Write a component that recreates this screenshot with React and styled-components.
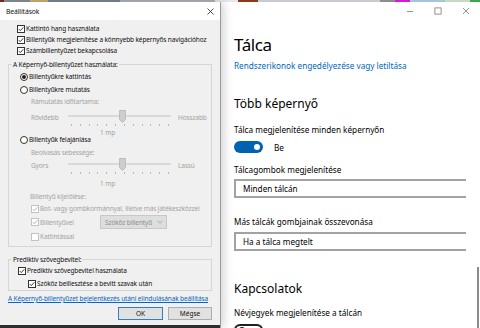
import React from 'react';
import styled, { createGlobalStyle } from 'styled-components';

const Global = createGlobalStyle`
  html, body { margin: 0; padding: 0; width: 480px; height: 328px; overflow: hidden; background: #fff; }
  *, *::before, *::after { box-sizing: border-box; }
`;

const Screen = styled.div`
  width: 480px;
  height: 328px;
  display: flex;
  flex-direction: column;
  overflow: hidden;
  font-family: "Noto Sans", "Open Sans", sans-serif;
`;

const Strip = styled.div`
  height: 2px;
  flex: none;
  background: linear-gradient(to right,
    #7a2a1a 0 4px, #8a8f96 4px 30px, #c9b27a 30px 48px, #7d8896 48px 120px,
    #b0b5bb 120px 215px, #e8e8e8 215px 238px, #8c3a1c 238px 258px, #c7ccd2 258px 380px,
    #8d8d8d 380px 395px, #d21ad2 395px 410px, #a9c3da 410px 445px, #c9d8c0 445px 470px,
    #3aa84a 470px 480px);
`;

const Main = styled.div`
  flex: 1;
  min-height: 0;
  display: flex;
`;

/* ---------- Dialog ---------- */

const Dialog = styled.section`
  width: 221px;
  flex: none;
  display: flex;
  flex-direction: column;
  background: #f0f0f0;
  border-right: 1px solid #9a9a9a;
  box-shadow: 2px 0 10px rgba(0, 0, 0, 0.2);
  position: relative;
  z-index: 2;
  font-size: 6.5px;
  letter-spacing: -0.12px;
  color: #111;
`;

const TitleBar = styled.header`
  height: 18px;
  flex: none;
  background: #fff;
  display: flex;
  align-items: center;
  justify-content: space-between;
  padding: 0 6px 0 6px;
`;

const DialogTitle = styled.span`
  font-size: 6.8px;
  color: #111;
`;

const CloseIcon = styled.svg`
  width: 7px;
  height: 7px;
  display: block;
`;

const Body = styled.div`
  flex: 1;
  display: flex;
  flex-direction: column;
  padding: 3px 8px 0 8px;
`;

const CheckRow = styled.div`
  display: flex;
  align-items: center;
  gap: 1px;
  height: ${p => p.$h || 11}px;
  margin-top: ${p => p.$mt || 0}px;
  padding-left: ${p => p.$indent || 0}px;
  color: ${p => (p.$disabled ? '#a3a3a3' : '#111')};
  white-space: nowrap;
`;

const Box = styled.span`
  width: 8px;
  height: 8px;
  flex: none;
  background: #fff;
  border: 1px solid ${p => (p.$disabled ? '#c2c2c2' : '#333')};
  display: flex;
  align-items: center;
  justify-content: center;
`;

const CheckMark = styled.svg`
  width: 6px;
  height: 6px;
  display: block;
`;

const Label = styled.span`
  flex: none;
  width: ${p => p.$w || 'auto'};
`;

const Radio = styled.span`
  width: 8px;
  height: 8px;
  flex: none;
  border-radius: 50%;
  background: #fff;
  border: 1px solid #333;
  display: flex;
  align-items: center;
  justify-content: center;
  &::after {
    content: '';
    width: 4px;
    height: 4px;
    border-radius: 50%;
    background: ${p => (p.$checked ? '#222' : 'transparent')};
  }
`;

const Group = styled.fieldset`
  margin: ${p => p.$mt || 0}px 0 0 0;
  padding: ${p => p.$pt || 0}px 0 ${p => p.$pb || 0}px 0;
  border: 1px solid #d5d5d5;
  min-width: 0;
  display: flex;
  flex-direction: column;
`;

const Legend = styled.legend`
  margin-left: 3px;
  padding: 0 1px;
  line-height: 9px;
  height: 9px;
  color: #111;
`;

const Caption = styled.div`
  height: ${p => p.$h || 11}px;
  margin-top: ${p => p.$mt || 0}px;
  padding-left: ${p => p.$indent || 0}px;
  display: flex;
  align-items: center;
  color: #a3a3a3;
  white-space: nowrap;
`;

const SliderRow = styled.div`
  height: 12px;
  margin-top: ${p => p.$mt || 0}px;
  padding-left: 22px;
  display: flex;
  align-items: center;
  color: #a3a3a3;
`;

const SliderLabel = styled.span`
  width: 37px;
  flex: none;
`;

const SliderTrack = styled.div`
  width: 103px;
  height: 12px;
  flex: none;
  margin-right: 7px;
  display: flex;
  align-items: center;
  background: linear-gradient(#d9d9d9, #d9d9d9) left 4px / 100% 2px no-repeat;
`;

const Thumb = styled.svg`
  width: 7px;
  height: 13px;
  display: block;
  margin-left: 51px;
  margin-top: -1px;
`;

const TickRow = styled.div`
  height: 5px;
  margin-left: 62px;
  width: 98px;
  display: flex;
  justify-content: space-between;
  align-items: flex-start;
  padding-top: 1px;
`;

const Tick = styled.span`
  width: 1px;
  height: 2px;
  background: #b8b8b8;
`;

const Combo = styled.div`
  width: 67px;
  height: 14px;
  flex: none;
  background: #dedede;
  border: 1px solid #c8c8c8;
  display: flex;
  align-items: center;
  justify-content: space-between;
  padding: 0 3px 0 4px;
  color: #8f8f8f;
`;

const Chevron = styled.svg`
  width: 6px;
  height: 4px;
  display: block;
`;

const DialogLink = styled.a`
  display: block;
  height: 11px;
  line-height: 11px;
  margin-top: 2px;
  color: #0066cc;
  text-decoration: underline;
  white-space: nowrap;
  cursor: pointer;
`;

const ButtonRow = styled.div`
  margin-top: 3px;
  display: flex;
  justify-content: flex-end;
  gap: 5px;
`;

const DialogButton = styled.button`
  width: ${p => p.$w}px;
  height: 13px;
  padding: 0;
  background: #e1e1e1;
  border: 1px solid ${p => (p.$default ? '#2f7fc1' : '#adadad')};
  font: inherit;
  color: #111;
  display: flex;
  align-items: center;
  justify-content: center;
`;

const BottomEdge = styled.div`
  margin-top: auto;
  height: 3px;
  flex: none;
  background: #2e2e2e;
`;

/* ---------- Settings ---------- */

const Settings = styled.main`
  flex: 1;
  min-width: 0;
  position: relative;
  background: #fff;
  padding-left: 13px;
  display: flex;
  flex-direction: column;
  overflow: hidden;
  color: #000;
`;

const WindowControls = styled.div`
  height: 18px;
  flex: none;
  display: flex;
  justify-content: flex-end;
`;

const WinButton = styled.span`
  width: 28px;
  height: 18px;
  display: flex;
  align-items: center;
  justify-content: center;
`;

const WinIcon = styled.svg`
  width: 8px;
  height: 8px;
  display: block;
`;

const PageTitle = styled.h1`
  margin: 14px 0 0 0;
  font-size: 17px;
  line-height: 22px;
  height: 22px;
  font-weight: 400;
  letter-spacing: -0.4px;
`;

const SettingsLink = styled.a`
  display: block;
  margin-top: 4px;
  font-size: 8.2px;
  line-height: 12px;
  color: #0067b8;
  cursor: pointer;
  white-space: nowrap;
`;

const SectionTitle = styled.h2`
  margin: ${p => p.$mt}px 0 0 0;
  font-size: 12px;
  line-height: 16px;
  height: 16px;
  font-weight: 400;
  white-space: nowrap;
`;

const FieldLabel = styled.div`
  margin-top: ${p => p.$mt}px;
  font-size: 8.2px;
  line-height: 12px;
  height: 12px;
  white-space: nowrap;
`;

const ToggleRow = styled.div`
  margin-top: ${p => p.$mt}px;
  height: 12px;
  flex: none;
  display: flex;
  align-items: center;
  gap: 11px;
  font-size: 8.2px;
`;

const Toggle = styled.span`
  width: 29px;
  height: 12px;
  flex: none;
  border-radius: 6px;
  display: flex;
  align-items: center;
  justify-content: ${p => (p.$on ? 'flex-end' : 'flex-start')};
  padding: 0 3px;
  background: ${p => (p.$on ? '#0063b1' : '#fff')};
  border: ${p => (p.$on ? 'none' : '2px solid #1f1f1f')};
  &::after {
    content: '';
    width: 6px;
    height: 6px;
    border-radius: 50%;
    background: ${p => (p.$on ? '#fff' : '#1f1f1f')};
  }
`;

const Select = styled.div`
  margin-top: ${p => p.$mt}px;
  width: 232px;
  height: 19px;
  flex: none;
  border-top: 2px solid #a2a2a2;
  border-bottom: 2px solid #a2a2a2;
  border-left: 2px solid #a2a2a2;
  padding-left: 7px;
  display: flex;
  align-items: center;
  font-size: 8.2px;
  white-space: nowrap;
`;

const Scrollbar = styled.div`
  position: absolute;
  right: 1px;
  top: 265px;
  width: 2px;
  height: 70px;
  background: #8a8a8a;
`;

const Check = ({ disabled }) => (
  <CheckMark viewBox="0 0 6 6">
    <path d="M0.8 3.1 L2.3 4.6 L5.3 1.3" fill="none" stroke={disabled ? '#a8a8a8' : '#222'} strokeWidth="0.9" />
  </CheckMark>
);

const CheckItem = ({ checked = true, disabled, children, ...rest }) => (
  <CheckRow $disabled={disabled} {...rest}>
    <Box $disabled={disabled}>{checked && <Check disabled={disabled} />}</Box>
    <Label>{children}</Label>
  </CheckRow>
);

const RadioItem = ({ checked, children, h = 13 }) => (
  <CheckRow $h={h} $indent={11}>
    <Radio $checked={checked} />
    <Label>{children}</Label>
  </CheckRow>
);

const Slider = ({ left, right, mt }) => (
  <>
    <SliderRow $mt={mt}>
      <SliderLabel>{left}</SliderLabel>
      <SliderTrack>
        <Thumb viewBox="0 0 7 13">
          <polygon points="0.5,0.5 6.5,0.5 6.5,9.5 3.5,12.5 0.5,9.5" fill="#cdcdcd" stroke="#bdbdbd" strokeWidth="1" />
        </Thumb>
      </SliderTrack>
      <span>{right}</span>
    </SliderRow>
    <TickRow>
      {Array.from({ length: 12 }).map((_, i) => (
        <Tick key={i} />
      ))}
    </TickRow>
  </>
);

export default function App() {
  return (
    <>
      <Global />
      <Screen>
        <Strip />
        <Main>
          <Dialog>
            <TitleBar>
              <DialogTitle>Beállítások</DialogTitle>
              <CloseIcon viewBox="0 0 7 7">
                <path d="M0.5 0.5 L6.5 6.5 M6.5 0.5 L0.5 6.5" stroke="#222" strokeWidth="0.8" />
              </CloseIcon>
            </TitleBar>
            <Body>
              <CheckItem $indent={9}>Kattintó hang használata</CheckItem>
              <CheckItem $indent={9}>Billentyűk megjelenítése a könnyebb képernyős navigációhoz</CheckItem>
              <CheckItem $indent={9}>Számbillentyűzet bekapcsolása</CheckItem>

              <Group $mt={4} $pt={1} $pb={3}>
                <Legend>A Képernyő-billentyűzet használata:</Legend>
                <RadioItem checked>Billentyűkre kattintás</RadioItem>
                <RadioItem>Billentyűkre mutatás</RadioItem>
                <Caption $indent={22}>Rámutatás időtartama:</Caption>
                <Slider left="Rövidebb" right="Hosszabb" mt={4} />
                <Caption $indent={91} $h={8}>1 mp</Caption>
                <RadioItem h={7}>Billentyűk felajánlása</RadioItem>
                <Caption $indent={22} $mt={4}>Beolvasás sebessége:</Caption>
                <Slider left="Gyors" right="Lassú" mt={1} />
                <Caption $indent={91} $h={10} $mt={2}>1 mp</Caption>
                <Caption $indent={21} $mt={3}>Billentyű kijelölése:</Caption>
                <CheckItem disabled $indent={22} $h={13}>Bot- vagy gombkormánnyal, illetve más játékeszközzel</CheckItem>
                <CheckRow $disabled $indent={22} $h={14}>
                  <Box $disabled><Check disabled /></Box>
                  <Label $w="59px">Billentyűvel</Label>
                  <Combo>
                    <span>Szóköz billentyű</span>
                    <Chevron viewBox="0 0 6 4">
                      <path d="M0.5 0.7 L3 3.2 L5.5 0.7" fill="none" stroke="#9a9a9a" strokeWidth="0.8" />
                    </Chevron>
                  </Combo>
                </CheckRow>
                <CheckItem disabled checked={false} $indent={22} $h={13} $mt={1}>Kattintással</CheckItem>
              </Group>

              <Group $mt={8} $pt={1} $pb={1}>
                <Legend>Prediktív szövegbevitel:</Legend>
                <CheckItem $indent={9}>Prediktív szövegbevitel használata</CheckItem>
                <CheckItem $indent={19} $mt={2}>Szóköz beillesztése a bevitt szavak után</CheckItem>
              </Group>

              <DialogLink>A Képernyő-billentyűzet bejelentkezés utáni elindulásának beállítása</DialogLink>

              <ButtonRow>
                <DialogButton $w={45} $default>OK</DialogButton>
                <DialogButton $w={44}>Mégse</DialogButton>
              </ButtonRow>
            </Body>
            <BottomEdge />
          </Dialog>

          <Settings>
            <WindowControls>
              <WinButton>
                <WinIcon viewBox="0 0 8 8">
                  <path d="M1 4.5 H7" stroke="#777" strokeWidth="0.8" />
                </WinIcon>
              </WinButton>
              <WinButton>
                <WinIcon viewBox="0 0 8 8">
                  <rect x="0.9" y="0.9" width="6.2" height="6.2" fill="none" stroke="#777" strokeWidth="0.8" />
                </WinIcon>
              </WinButton>
              <WinButton>
                <WinIcon viewBox="0 0 8 8">
                  <path d="M1 1 L7 7 M7 1 L1 7" stroke="#777" strokeWidth="0.8" />
                </WinIcon>
              </WinButton>
            </WindowControls>

            <PageTitle>Tálca</PageTitle>
            <SettingsLink>Rendszerikonok engedélyezése vagy letiltása</SettingsLink>

            <SectionTitle $mt={24}>Több képernyő</SectionTitle>
            <FieldLabel $mt={12}>Tálca megjelenítése minden képernyőn</FieldLabel>
            <ToggleRow $mt={5}>
              <Toggle $on />
              <span>Be</span>
            </ToggleRow>
            <FieldLabel $mt={11}>Tálcagombok megjelenítése</FieldLabel>
            <Select $mt={3}>Minden tálcán</Select>
            <FieldLabel $mt={18}>Más tálcák gombjainak összevonása</FieldLabel>
            <Select $mt={4}>Ha a tálca megtelt</Select>

            <SectionTitle $mt={30}>Kapcsolatok</SectionTitle>
            <FieldLabel $mt={10}>Névjegyek megjelenítése a tálcán</FieldLabel>
            <ToggleRow $mt={5}>
              <Toggle />
            </ToggleRow>

            <Scrollbar />
          </Settings>
        </Main>
      </Screen>
    </>
  );
}
